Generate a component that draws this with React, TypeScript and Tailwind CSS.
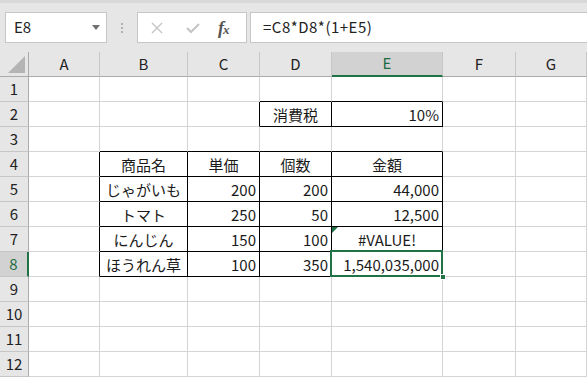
import React from 'react';

const cols = ['A', 'B', 'C', 'D', 'E', 'F', 'G'];

type Cell = { text?: string; align?: 'left' | 'center' | 'right'; r?: boolean; b?: boolean };

// black borders: r = right edge black, b = bottom edge black
const sheet: Record<string, Cell> = {
  D1: { b: true },
  E1: { b: true },
  C2: { r: true },
  D2: { text: '消費税', align: 'center', r: true, b: true },
  E2: { text: '10%', align: 'right', r: true, b: true },
  B3: { b: true },
  C3: { b: true },
  D3: { b: true },
  E3: { b: true },
  A4: { r: true },
  A5: { r: true },
  A6: { r: true },
  A7: { r: true },
  A8: { r: true },
  B4: { text: '商品名', align: 'center', r: true, b: true },
  C4: { text: '単価', align: 'center', r: true, b: true },
  D4: { text: '個数', align: 'center', r: true, b: true },
  E4: { text: '金額', align: 'center', r: true, b: true },
  B5: { text: 'じゃがいも', align: 'center', r: true, b: true },
  C5: { text: '200', align: 'right', r: true, b: true },
  D5: { text: '200', align: 'right', r: true, b: true },
  E5: { text: '44,000', align: 'right', r: true, b: true },
  B6: { text: 'トマト', align: 'center', r: true, b: true },
  C6: { text: '250', align: 'right', r: true, b: true },
  D6: { text: '50', align: 'right', r: true, b: true },
  E6: { text: '12,500', align: 'right', r: true, b: true },
  B7: { text: 'にんじん', align: 'center', r: true, b: true },
  C7: { text: '150', align: 'right', r: true, b: true },
  D7: { text: '100', align: 'right', r: true, b: true },
  E7: { text: '#VALUE!', align: 'center', r: true, b: true },
  B8: { text: 'ほうれん草', align: 'center', r: true, b: true },
  C8: { text: '100', align: 'right', r: true, b: true },
  D8: { text: '350', align: 'right', r: true, b: true },
  E8: { text: '1,540,035,000', align: 'right', r: true, b: true },
};

function GridCell({ id }: { id: string }) {
  const c = sheet[id] || {};
  const alignClass = c.align === 'right' ? 'justify-end pr-[3px]' : c.align === 'center' ? 'justify-center' : 'justify-start pl-[3px]';
  return (
    <div
      className={`relative flex items-center h-[25px] bg-white text-[15px] text-[#1a1a1a] border-r border-b ${
        c.r ? 'border-r-black' : 'border-r-[#d4d4d4]'
      } ${c.b ? 'border-b-black' : 'border-b-[#d4d4d4]'} ${alignClass}`}
    >
      {id === 'E7' && (
        <div className="absolute left-0 top-0 w-0 h-0 border-t-[6px] border-t-[#1e7145] border-r-[6px] border-r-transparent" />
      )}
      {id === 'E8' && (
        <>
          <div className="absolute left-[-2px] top-[-2px] right-[-1px] bottom-[-1px] border-2 border-[#217346] z-10" />
          <div className="absolute right-[-4px] bottom-[-4px] w-[6px] h-[6px] bg-[#217346] border border-white z-20" />
        </>
      )}
      <span className="leading-none">{c.text}</span>
    </div>
  );
}

export default function App() {
  const rows = Array.from({ length: 12 }, (_, i) => i + 1);
  return (
    <div
      className="w-[587px] h-[377px] overflow-hidden bg-[#e6e6e6] select-none"
      style={{ fontFamily: "'Noto Sans CJK JP', 'Liberation Sans', sans-serif" }}
    >
      {/* Formula bar */}
      <div className="h-[52px] border-t-[3px] border-t-[#d8d8d8] flex items-start pt-[9px]">
        <div className="ml-[5px] w-[102px] h-[31px] bg-white border border-[#c6c6c6] flex items-center justify-between pl-[8px] pr-[6px]">
          <span className="text-[15px] text-[#222]">E8</span>
          <span className="w-0 h-0 border-l-[4px] border-r-[4px] border-t-[5px] border-l-transparent border-r-transparent border-t-[#707070]" />
        </div>
        <div className="w-[30px] h-[31px] flex flex-col items-center justify-center gap-[2px]">
          <span className="w-[2px] h-[2px] bg-[#b0b0b0]" />
          <span className="w-[2px] h-[2px] bg-[#b0b0b0]" />
          <span className="w-[2px] h-[2px] bg-[#b0b0b0]" />
        </div>
        <div className="w-[110px] h-[31px] bg-white border border-[#c6c6c6] flex items-center">
          <svg width="12" height="12" viewBox="0 0 12 12" className="ml-[13px]">
            <path d="M1 1 L11 11 M11 1 L1 11" stroke="#c4c4c4" strokeWidth="1.4" fill="none" />
          </svg>
          <svg width="14" height="12" viewBox="0 0 14 12" className="ml-[23px]">
            <path d="M1 6 L5 10 L13 2" stroke="#c4c4c4" strokeWidth="2" fill="none" />
          </svg>
          <span
            className="ml-[18px] text-[18px] leading-none italic font-bold text-[#555] tracking-[-1px]"
            style={{ fontFamily: "'Liberation Serif', serif" }}
          >
            f<span className="text-[13px]">x</span>
          </span>
        </div>
        <div className="ml-[3px] flex-1 h-[31px] bg-white border border-[#c6c6c6] border-r-0 flex items-center pl-[12px]">
          <span className="text-[15px] text-[#222] tracking-[0.5px]">=C8*D8*(1+E5)</span>
        </div>
      </div>

      {/* Sheet grid */}
      <div className="grid grid-cols-[29px_71px_88px_72px_72px_111px_73px_71px] grid-rows-[25px_repeat(12,25px)]">
        {/* corner */}
        <div className="relative h-[25px] bg-[#e6e6e6] border-r border-b border-[#ababab]">
          <div className="absolute right-[3px] bottom-[3px] w-0 h-0 border-l-[17px] border-l-transparent border-b-[17px] border-b-[#b4b4b4]" />
        </div>
        {cols.map((c) => (
          <div
            key={c}
            className={`h-[25px] flex items-center justify-center text-[15px] border-r border-r-[#c6c6c6] ${
              c === 'E'
                ? 'bg-[#d2d2d2] text-[#1e6b42] border-b-2 border-b-[#217346]'
                : 'bg-[#e6e6e6] text-[#222] border-b border-b-[#ababab]'
            }`}
          >
            {c}
          </div>
        ))}
        {rows.map((r) => (
          <React.Fragment key={r}>
            <div
              className={`h-[25px] flex items-center justify-center text-[15px] border-b border-b-[#c6c6c6] ${
                r === 8
                  ? 'bg-[#d2d2d2] text-[#1e6b42] border-r-2 border-r-[#217346]'
                  : 'bg-[#e6e6e6] text-[#222] border-r border-r-[#ababab]'
              }`}
            >
              {r}
            </div>
            {cols.map((c) => (
              <GridCell key={c + r} id={c + r} />
            ))}
          </React.Fragment>
        ))}
      </div>
    </div>
  );
}
